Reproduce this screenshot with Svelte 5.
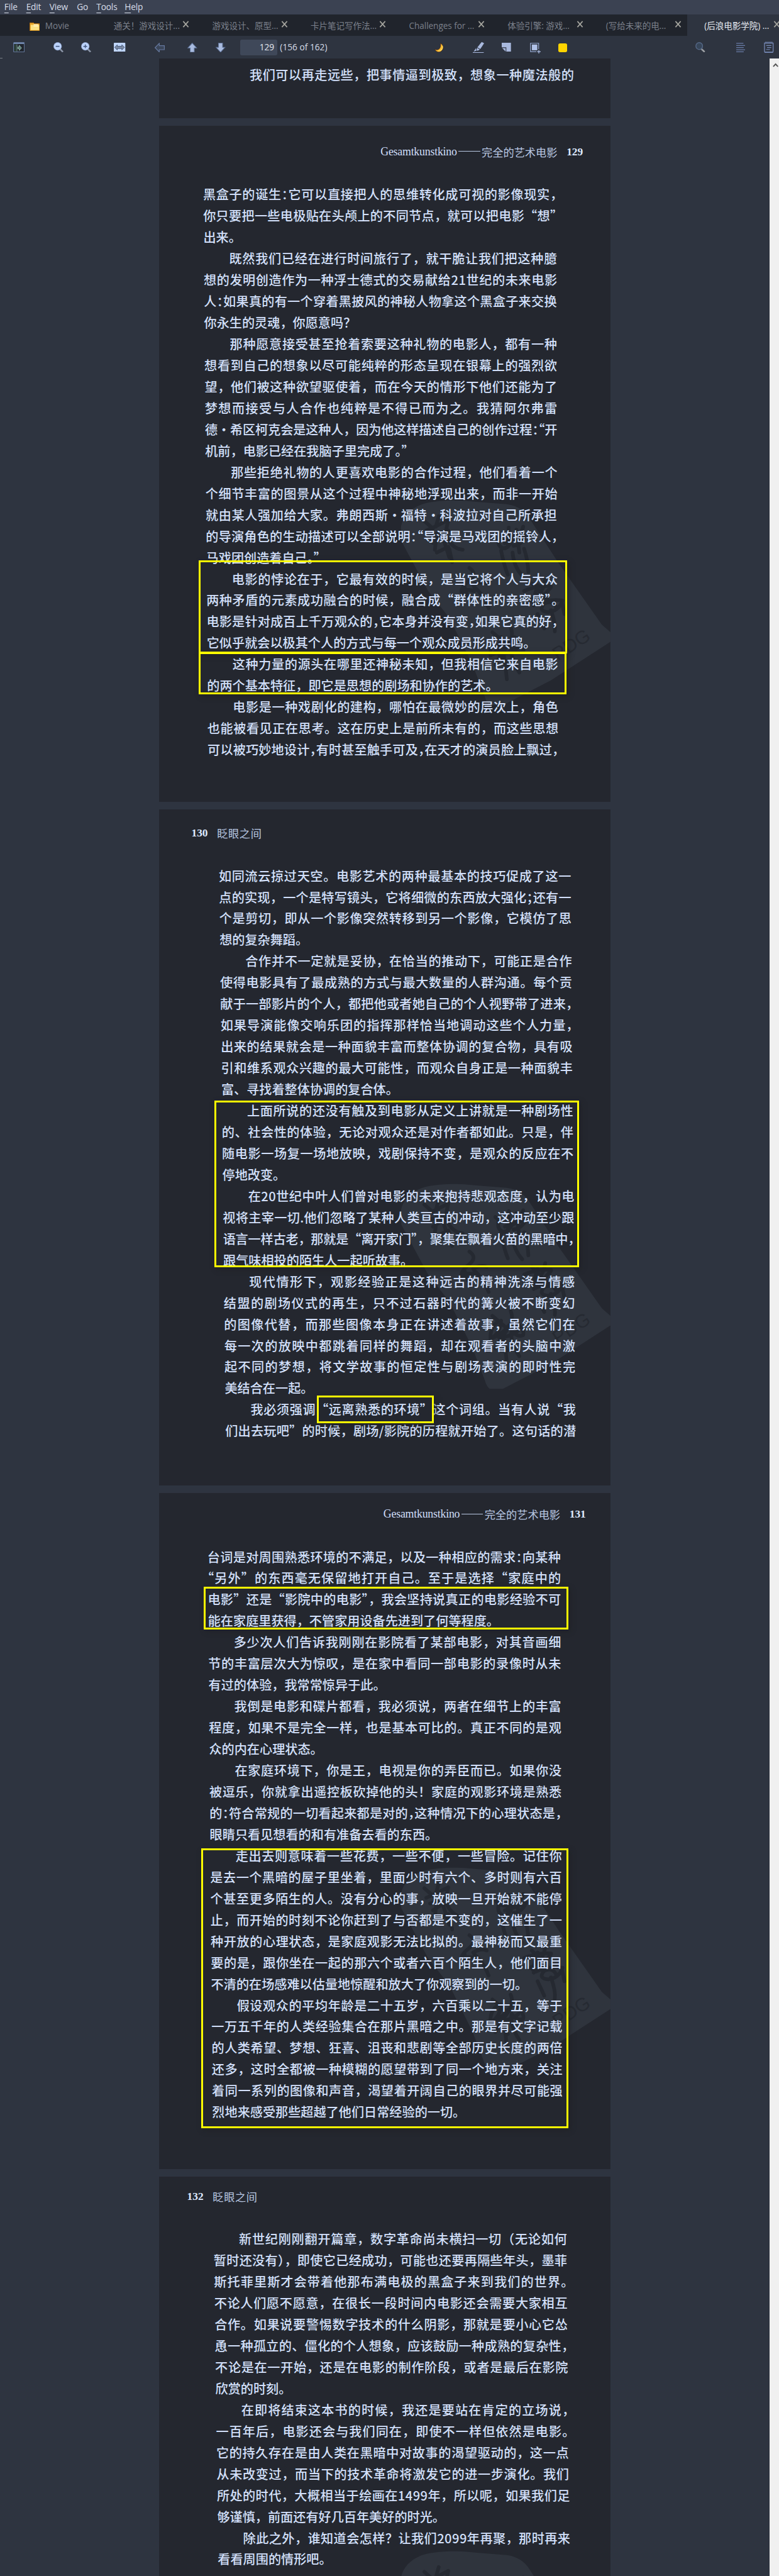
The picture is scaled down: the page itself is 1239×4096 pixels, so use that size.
<script>
  const FONT = 22;

  // Narrow punctuation is written in ASCII in the page data and set half-width.
  const narrow = {
    ',': '，', ':': '：', ';': '；', '?': '？', '!': '！',
    '<': '“', '>': '”', '|': '。', ')': '）', '(': '（'
  };

  const tabs = [
    { title: '通关！游戏设计...' },
    { title: '游戏设计、原型...' },
    { title: '卡片笔记写作法...' },
    { title: 'Challenges for ...' },
    { title: '体验引擎: 游戏...' },
    { title: '(写给未来的电...' },
    { title: '(后浪电影学院) ...', active: true }
  ];

  const menus = [
    ['F', 'ile', 38], ['E', 'dit', 40.5], ['V', 'iew', 47.5], ['', 'Go', 34], ['T', 'ools', 49], ['H', 'elp', 40]
  ];

  // "^" opens a paragraph, "$" closes it; every other line is justified.
  const source = [
    {
      height: 103, textTop: 9.5, left: [157.6, 157.6], right: [721.4, 721.4],
      lines: ['我们可以再走远些，把事情逼到极致，想象一种魔法般的']
    },
    {
      height: 1174, textTop: 101.3, left: [76.6, 84.5], right: [691, 694.5], stamp: true,
      side: 'right', no: '129', headY: 45.5, headEdge: 47.5,
      lines: [
        '黑盒子的诞生:它可以直接把人的思维转化成可视的影像现实,',
        '你只要把一些电极贴在头颅上的不同节点，就可以把电影“想>',
        '出来|$',
        '^既然我们已经在进行时间旅行了，就干脆让我们把这种臆',
        '想的发明创造作为一种浮士德式的交易献给21世纪的未来电影',
        '人:如果真的有一个穿着黑披风的神秘人物拿这个黑盒子来交换',
        '你永生的灵魂，你愿意吗?$',
        '^那种愿意接受甚至抢着索要这种礼物的电影人，都有一种',
        '想看到自己的想象以尽可能纯粹的形态呈现在银幕上的强烈欲',
        '望，他们被这种欲望驱使着，而在今天的情形下他们还能为了',
        '梦想而接受与人合作也纯粹是不得已而为之。我猜阿尔弗雷',
        '德·希区柯克会是这种人，因为他这样描述自己的创作过程:<开',
        '机前，电影已经在我脑子里完成了|>$',
        '^那些拒绝礼物的人更喜欢电影的合作过程，他们看着一个',
        '个细节丰富的图景从这个过程中神秘地浮现出来，而非一开始',
        '就由某人强加给大家。弗朗西斯·福特·科波拉对自己所承担',
        '的导演角色的生动描述可以全部说明:<导演是马戏团的摇铃人,',
        '马戏团创造着自己|>$',
        '^电影的悖论在于，它最有效的时候，是当它将个人与大众',
        '两种矛盾的元素成功融合的时候，融合成“群体性的亲密感>|',
        '电影是针对成百上千万观众的,它本身并没有变,如果它真的好,',
        '它似乎就会以极其个人的方式与每一个观众成员形成共鸣|$',
        '^这种力量的源头在哪里还神秘未知，但我相信它来自电影',
        '的两个基本特征，即它是思想的剧场和协作的艺术|$',
        '^电影是一种戏剧化的建构，哪怕在最微妙的层次上，角色',
        '也能被看见正在思考。这在历史上是前所未有的，而这些思想',
        '可以被巧妙地设计,有时甚至触手可及,在天才的演员脸上飘过,'
      ],
      boxes: [
        { x: 69, y: 755, w: 640, h: 162 },
        { x: 69, y: 914, w: 639, h: 74 }
      ]
    },
    {
      height: 1174, textTop: 97.2, left: [104, 115.2], right: [716.5, 725], stamp: true,
      side: 'left', no: '130', headY: 42, headEdge: 56.5,
      lines: [
        '如同流云掠过天空。电影艺术的两种最基本的技巧促成了这一',
        '点的实现，一个是特写镜头，它将细微的东西放大强化;还有一',
        '个是剪切，即从一个影像突然转移到另一个影像，它模仿了思',
        '想的复杂舞蹈|$',
        '^合作并不一定就是妥协，在恰当的推动下，可能正是合作',
        '使得电影具有了最成熟的方式与最大数量的人群沟通。每个贡',
        '献于一部影片的个人，都把他或者她自己的个人视野带了进来,',
        '如果导演能像交响乐团的指挥那样恰当地调动这些个人力量,',
        '出来的结果就会是一种面貌丰富而整体协调的复合物，具有吸',
        '引和维系观众兴趣的最大可能性，而观众自身正是一种面貌丰',
        '富、寻找着整体协调的复合体|$',
        '^上面所说的还没有触及到电影从定义上讲就是一种剧场性',
        '的、社会性的体验，无论对观众还是对作者都如此。只是，伴',
        '随电影一场复一场地放映，戏剧保持不变，是观众的反应在不',
        '停地改变|$',
        '^在20世纪中叶人们曾对电影的未来抱持悲观态度，认为电',
        '视将主宰一切.他们忽略了某种人类亘古的冲动，这冲动至少跟',
        '语言一样古老，那就是“离开家门>，聚集在飘着火苗的黑暗中,',
        '跟气味相投的陌生人一起听故事|$',
        '^现代情形下，观影经验正是这种远古的精神洗涤与情感',
        '结盟的剧场仪式的再生，只不过石器时代的篝火被不断变幻',
        '的图像代替，而那些图像本身正在讲述着故事，虽然它们在',
        '每一次的放映中都跳着同样的舞蹈，却在观看者的头脑中激',
        '起不同的梦想，将文学故事的恒定性与剧场表演的即时性完',
        '美结合在一起|$',
        '^我必须强调“远离熟悉的环境”这个词组。当有人说“我',
        '们出去玩吧”的时候，剧场/影院的历程就开始了。这句话的潜'
      ],
      boxes: [
        { x: 96, y: 506, w: 634, h: 290 },
        { x: 274, y: 1018, w: 203, h: 48 }
      ]
    },
    {
      height: 1174, textTop: 92.8, left: [84.2, 92.4], right: [698.6, 701.8], stamp: true,
      side: 'right', no: '131', headY: 37.6, headEdge: 42.5,
      lines: [
        '台词是对周围熟悉环境的不满足，以及一种相应的需求:向某种',
        '<另外”的东西毫无保留地打开自己。至于是选择“家庭中的',
        '电影”还是“影院中的电影>，我会坚持说真正的电影经验不可',
        '能在家庭里获得，不管家用设备先进到了何等程度|$',
        '^多少次人们告诉我刚刚在影院看了某部电影，对其音画细',
        '节的丰富层次大为惊叹，是在家中看同一部电影的录像时从未',
        '有过的体验，我常常惊异于此|$',
        '^我倒是电影和碟片都看，我必须说，两者在细节上的丰富',
        '程度，如果不是完全一样，也是基本可比的。真正不同的是观',
        '众的内在心理状态|$',
        '^在家庭环境下，你是王，电视是你的弄臣而已。如果你没',
        '被逗乐，你就拿出遥控板砍掉他的头！家庭的观影环境是熟悉',
        '的:符合常规的一切看起来都是对的,这种情况下的心理状态是,',
        '眼睛只看见想看的和有准备去看的东西|$',
        '^走出去则意味着一些花费，一些不便，一些冒险。记住你',
        '是去一个黑暗的屋子里坐着，里面少时有六个、多时则有六百',
        '个甚至更多陌生的人。没有分心的事，放映一旦开始就不能停',
        '止，而开始的时刻不论你赶到了与否都是不变的，这催生了一',
        '种开放的心理状态，是家庭观影无法比拟的。最神秘而又最重',
        '要的是，跟你坐在一起的那六个或者六百个陌生人，他们面目',
        '不清的在场感难以估量地惊醒和放大了你观察到的一切|$',
        '^假设观众的平均年龄是二十五岁，六百乘以二十五，等于',
        '一万五千年的人类经验集合在那片黑暗之中。那是有文字记载',
        '的人类希望、梦想、狂喜、沮丧和悲剧等全部历史长度的两倍',
        '还多，这时全都被一种模糊的愿望带到了同一个地方来，关注',
        '着同一系列的图像和声音，渴望着开阔自己的眼界并尽可能强',
        '烈地来感受那些超越了他们日常经验的一切|$'
      ],
      boxes: [
        { x: 78, y: 163, w: 633, h: 75 },
        { x: 74, y: 617, w: 637, h: 487 }
      ]
    },
    {
      height: 694, textTop: 90.3, left: [94.5, 102.2], right: [709.3, 714], stamp: true, cut: true,
      side: 'left', no: '132', headY: 35.5, headEdge: 49,
      lines: [
        '^新世纪刚刚翻开篇章，数字革命尚未横扫一切（无论如何',
        '暂时还没有)，即使它已经成功，可能也还要再隔些年头，墨菲',
        '斯托菲里斯才会带着他那布满电极的黑盒子来到我们的世界|',
        '不论人们愿不愿意，在很长一段时间内电影还会需要大家相互',
        '合作。如果说要警惕数字技术的什么阴影，那就是要小心它怂',
        '恿一种孤立的、僵化的个人想象，应该鼓励一种成熟的复杂性,',
        '不论是在一开始，还是在电影的制作阶段，或者是最后在影院',
        '欣赏的时刻|$',
        '^在即将结束这本书的时候，我还是要站在肯定的立场说,',
        '一百年后，电影还会与我们同在，即使不一样但依然是电影|',
        '它的持久存在是由人类在黑暗中对故事的渴望驱动的，这一点',
        '从未改变过，而当下的技术革命将激发它的进一步演化。我们',
        '所处的时代，大概相当于绘画在1499年，所以呢，如果我们足',
        '够谨慎，前面还有好几百年美好的时光|$',
        '^除此之外，谁知道会怎样？让我们2099年再聚，那时再来',
        '看看周围的情形吧|$'
      ]
    }
  ];

  // Advance of one character, in em.
  function advance(ch) {
    if (narrow[ch]) return 0.5;
    if (/\d/.test(ch)) return 0.555;
    if (ch === '.') return 0.278;
    if (ch === '/') return 0.392;
    return 1;
  }

  function setLine(raw, page, i) {
    const t = page.lines.length > 1 ? i / (page.lines.length - 1) : 0;
    const indent = raw[0] === '^';
    const last = raw.endsWith('$');
    const text = raw.replace('^', '').replace('$', '');
    const left = page.left[0] + (page.left[1] - page.left[0]) * t + (indent ? 44.5 : 0);
    const right = page.right[0] + (page.right[1] - page.right[0]) * t;
    const chars = [...text];
    const em = chars.reduce((sum, ch) => sum + advance(ch), 0);
    const spacing = last ? 0.02 : (right - left - em * FONT) / (chars.length - 1);
    const runs = [];
    for (const ch of chars) {
      const kind = narrow[ch] ? 'half' : ch === '·' ? 'mid' : 'full';
      const tail = runs[runs.length - 1];
      if (tail && tail.kind === kind && kind === 'full') tail.text += ch;
      else runs.push({ kind, text: narrow[ch] || ch });
    }
    return { left, spacing, runs };
  }

  const pages = source.map((p) => ({ ...p, set: p.lines.map((l, i) => setLine(l, p, i)) }));
</script>

<div class="app" lang="zh-CN">
  <nav class="menubar">
    {#each menus as [key, rest, width]}
      <span class="menu" style:width="{width}px"><u>{key}</u>{rest}</span>
    {/each}
  </nav>

  <div class="tabs">
    <div class="tab home">
      <svg width="18" height="16" viewBox="0 0 18 16">
        <path d="M.5 1.5h6.500l1.500 1.500h9v12.500H.5z" fill="#e9a92c" stroke="#b9720f" />
        <path d="M2 5h14.500v9H2z" fill="#fbe184" />
        <path d="M7 4.500h8M7 7h8" stroke="#fff8d2" stroke-width="1.500" />
      </svg>
      <span>Movie</span>
    </div>
    {#each tabs as tab}
      <div class="tab" class:active={tab.active}>
        <span class="title">{tab.title}</span>
        <svg class="close" width="12" height="12" viewBox="0 0 12 12"><path d="M1.500 1l9 10M10.500 1l-9 10" stroke="#a3a39d" stroke-width="1.900" /></svg>
      </div>
    {/each}
  </div>

  <div class="toolbar">
    <svg class="sidebar" width="20" height="18" viewBox="0 0 20 18">
      <rect x=".7" y=".7" width="18.600" height="16.300" rx="1" fill="#20252d" stroke="#63779a" stroke-width="1.400" />
      <path d="M1 2h18" stroke="#6f86ac" stroke-width="2.500" />
      <path d="M2 4h4v12H2z" fill="#2b4038" /><path d="M6.500 4v12" stroke="#7d9c93" />
      <path d="M8 8.500h2.500V5.500l4 4.500-4 4.500v-3H8z" fill="#5c7f77" stroke="#a4c8bd" stroke-width=".8" />
    </svg>
    <svg class="zout" width="18" height="18" viewBox="0 0 18 18">
      <path d="M11 11.500l5.500 5.500" stroke="#8a94a6" stroke-width="2.800" />
      <circle cx="7.300" cy="7.300" r="6.800" fill="#bcd3fb" stroke="#90a6d1" stroke-width=".8" />
      <path d="M4 7.300h6.500" stroke="#435880" stroke-width="1.700" />
    </svg>
    <svg class="zin" width="18" height="18" viewBox="0 0 18 18">
      <path d="M11 11.500l5.500 5.500" stroke="#8a94a6" stroke-width="2.800" />
      <circle cx="7.300" cy="7.300" r="6.800" fill="#bcd3fb" stroke="#90a6d1" stroke-width=".8" />
      <path d="M4 7.300h6.500M7.300 4v6.500" stroke="#435880" stroke-width="1.600" />
    </svg>
    <svg class="fit" width="20" height="16" viewBox="0 0 20 16">
      <rect width="20" height="16" rx="1" fill="#c0d6fc" />
      <path d="M1.500 8l4.500-4.500v2.500h8V3.500L18.500 8 14 12.500V10H6v2.500z" fill="#7d8ba5" stroke="#364867" stroke-width=".9" />
    </svg>
    <svg class="back" width="18" height="17" viewBox="0 0 18 17">
      <path d="M.8 8.500L8 1v4h8.800v7H8v4z" fill="#3b4659" stroke="#66799f" stroke-width="1.300" />
    </svg>
    <svg class="up" width="17" height="17" viewBox="0 0 17 17">
      <path d="M8.500.6l7.700 8.400H12v7.400H5V9H.8z" fill="#a9bbdf" stroke="#5f7398" stroke-width="1.100" />
    </svg>
    <svg class="down" width="17" height="17" viewBox="0 0 17 17">
      <path d="M8.500 16.400L.8 8H5V.6h7V8h4.200z" fill="#a9bbdf" stroke="#5f7398" stroke-width="1.100" />
    </svg>
    <span class="pageno">129</span>
    <span class="count">(156 of 162)</span>
    <svg class="moon" width="17" height="17" viewBox="0 0 17 17">
      <path d="M10.500.7c6 3.500 6 10.500 1 14C8 17.300 2.500 16 .8 11.500c4 1.800 7.700.3 9-3 1-2.500 1.200-5 .7-7.800z" fill="#ffb92e" stroke="#43281c" stroke-width=".8" />
      <path d="M13.600 5.500c1.500 5-2.600 9.300-7.600 8.500" fill="none" stroke="#ffd95e" stroke-width="1.500" />
    </svg>
    <svg class="pen" width="20" height="20" viewBox="0 0 20 20">
      <path d="M15.500.8L19.700 3 13 13.200 8 10z" fill="#a9b9de" /><path d="M7.500 11l4.600 3-3.300 1.800-2.300-.2z" fill="#a9b9de" />
      <path d="M5.500 11.500L1.500 17.500l4.500-1.400z" fill="#a9b9de" /><path d="M0 19.200h19" stroke="#a9b9de" stroke-width="1.300" />
    </svg>
    <svg class="note" width="16" height="16" viewBox="0 0 16 16">
      <path d="M0 0h16v16H8V8H0z" fill="#a9b9de" /><path d="M.8 9.300h6v6z" fill="#a9b9de" />
    </svg>
    <svg class="snap" width="19" height="19" viewBox="0 0 19 19">
      <path d="M15 11V.8H.8v14.700H11" fill="none" stroke="#93a5ce" stroke-width="1.300" />
      <rect x="3.200" y="3" width="9.500" height="10" fill="#b0c1e8" />
      <path d="M15.300 12.500v6M12.300 15.500h6.200" stroke="#b0c1e8" stroke-width="1.300" />
    </svg>
    <span class="swatch"></span>
    <svg class="find" width="18" height="18" viewBox="0 0 18 18">
      <path d="M9.500 11l6.500 6" stroke="#8b8f96" stroke-width="3" /><path d="M12 13.200l4 3.600" stroke="#bdbdbd" stroke-width="1" />
      <ellipse cx="6.700" cy="6.800" rx="5.800" ry="6" fill="#37465a" stroke="#566988" stroke-width="1.500" />
    </svg>
    <svg class="outline" width="16" height="17" viewBox="0 0 16 17">
      <path d="M0 1h12.500M0 4.700h16M0 8.400h13M0 12.100h16M0 15.800h13" stroke="#697ba6" stroke-width="1.300" />
    </svg>
    <svg class="pad" width="17" height="20" viewBox="0 0 17 20">
      <path d="M1 2.500V17q0 2 2 2h11q2 0 2-2V2.500z" fill="none" stroke="#7688b5" stroke-width="1.400" />
      <path d="M1 18.500h15" stroke="#7688b5" stroke-width="1.500" />
      <path d="M3 .3v3.500M5.200.3v3.500M7.400.3v3.500M9.600.3v3.500M11.800.3v3.500M14 .3v3.500" stroke="#7688b5" stroke-width="1.100" />
      <path d="M4 7h9M5.500 10.500H13M4 14h6.500" stroke="#7688b5" stroke-width="1.200" />
    </svg>
  </div>

  <div class="body">
    <div class="tick"></div>
    <main class="pages">
      {#each pages as page}
        <section class="page" style:height="{page.height}px">
          {#if page.stamp}
            <svg class="stamp" viewBox="0 0 1170 1170" fill="none">
              <path
                d="M48 190C55 135 100 85 170 65C230 48 330 45 400 52L600 68C660 75 700 110 720 145L870 375L1095 695L1140 735V785L830 985L580 1115H510Q495 1105 485 1070L420 900L300 660L190 520L120 390L50 260Z"
                fill="#2f343d"
              />
              <g stroke="#252931" stroke-width="19" stroke-linecap="round" stroke-linejoin="round">
                <path d="M170 155l45 40M245 130l-15 55M180 205q60-25 115-55l-10 45M200 235l95-30M215 270l70-45M235 220l-10 85M260 220l40 125M285 235q30 65 85 70M235 320l60-30M300 300l15 70" />
                <path d="M540 220q40 40 90 20t55-55M560 230q-15 50 15 65t65-60M610 190l-5 100M590 270q70-20 110-40q-20 50-65 55M650 200l15 120M570 310q15 75 35 125M630 320q5 70 50 120M690 300q20 60 22 120" />
                <path d="M405 400q45 30-5 70q-45 35-35 60q25-25 65-10M425 490q40-25 70-10M430 500q50 40 75 110M380 500l15 50" />
                <path d="M690 520q65-30 140-25M730 480l80 80M800 460q-10 80-80 110M760 490l-25 90M830 500q-50 60-90 95M750 590q70-30 140-20q-20 55-75 60q-55-5-20-45q45-20 65 25M760 640l35 75M830 620q25 70 20 110M885 570l15 70" />
                <path d="M515 855q-5-75 55-95q-5 60-45 90q60-25 85-65M525 735l70 60M620 710q20 45-20 100t-60 95M640 760q55 50 45 75q-30 15-60-25q-10 60 40 135M560 850q70-10 100-40M585 860q10 60 15 120M550 830l55 85" />
              </g>
              {#if !page.cut}
                <text class="mark" x="865" y="885" transform="rotate(-33 865 885)">PDG</text>
              {/if}
            </svg>
          {/if}

          <div class="head {page.side}" style:height="{page.textTop}px" style:padding-top="{page.no ? page.headY - 15 : 0}px" style:--edge="{page.headEdge}px">
            {#if page.side === 'right'}
              <span class="latin">Gesamtkunstkino</span><i class="dash"></i><span class="cjk">完全的艺术电影</span><b>{page.no}</b>
            {:else if page.side === 'left'}
              <b>{page.no}</b><span class="cjk wide">眨眼之间</span>
            {/if}
          </div>

          {#each page.set as line}
            <p class="line" style:padding-left="{line.left}px" style:letter-spacing="{line.spacing}px">{#each line.runs as run}<span class={run.kind}>{run.text}</span>{/each}</p>
          {/each}

          {#each page.boxes ?? [] as box}
            <div class="box" style:left="{box.x}px" style:top="{box.y}px" style:width="{box.w}px" style:height="{box.h}px"></div>
          {/each}
        </section>
      {/each}
    </main>
    <div class="scrollbar">
      <svg width="10" height="8" viewBox="0 0 10 8"><path d="M1 6.500L5 2l4 4.500" fill="none" stroke="#505050" stroke-width="2" /></svg>
    </div>
  </div>
</div>

<style>
  :global(body) { margin: 0; background: #2e3440; overflow: hidden; }
  .app {
    width: 1353px;
    height: 4473px;
    zoom: 0.91574;
    overflow: hidden;
    background: #2e3440;
    color: #d8dee9;
    font-family: 'Open Sans', 'Noto Sans CJK SC', sans-serif;
    font-size: 15px;
  }
  svg { display: block; flex: none; }

  .menubar { display: flex; height: 25px; box-sizing: border-box; padding-left: 7.5px; background: #3b4252; line-height: 25px; letter-spacing: -0.2px; }
  .menu { flex: none; white-space: nowrap; }
  .menu u { text-underline-offset: 4px; text-decoration-thickness: 1px; }

  .tabs { display: flex; height: 37px; background: #20242c; color: #7b808b; }
  .tab { display: flex; flex: none; box-sizing: border-box; width: 171px; padding-left: 29.500px; line-height: 41px; white-space: nowrap; font-size: 14.8px; }
  .tab .title { width: 119.500px; letter-spacing: -0.05px; }
  .tab.home { width: 168px; padding-left: 51px; gap: 9.500px; }
  .tab.home svg { margin-top: 13px; }
  .tab.active { background: #2e3440; color: #e5e9f0; }
  .close { margin-top: 11.500px; }

  .toolbar { display: flex; align-items: flex-start; height: 40px; padding-top: 0; }
  .toolbar > svg { margin-top: 11px; }
  .toolbar .sidebar { margin-left: 22.500px; }
  .toolbar .zout { margin-left: 50.500px; }
  .toolbar .zin { margin-left: 30px; }
  .toolbar .fit { margin-left: 39px; margin-top: 12px; }
  .toolbar .back { margin-left: 50.500px; margin-top: 12px; }
  .toolbar .up { margin-left: 39px; margin-top: 12px; }
  .toolbar .down { margin-left: 32.500px; margin-top: 12px; }
  .pageno { flex: none; box-sizing: border-box; width: 65px; height: 27px; margin: 7px 0 0 25px; padding-right: 5.500px; border-radius: 3px; background: #3f4859; text-align: right; line-height: 26px; color: #e5e9f0; }
  .count { flex: none; width: 84px; margin: 7px 0 0 4.500px; line-height: 26px; white-space: nowrap; color: #d8dee9; }
  .toolbar .moon { margin-left: 184.500px; margin-top: 12px; }
  .toolbar .pen { margin-left: 49px; margin-top: 10px; }
  .toolbar .note { margin-left: 31px; margin-top: 12px; }
  .toolbar .snap { margin-left: 33px; margin-top: 12px; }
  .swatch { flex: none; width: 15px; height: 15.500px; margin: 13px 0 0 30px; border-radius: 3px; background: #ffd400; }
  .toolbar .find { margin-left: 222.500px; }
  .toolbar .outline { margin-left: 53px; margin-top: 12px; }
  .toolbar .pad { margin-left: 32.500px; margin-top: 10px; }

  .body { display: flex; height: 4371px; }
  .tick { flex: none; width: 4px; height: 1px; margin-top: -1px; margin-right: 272px; background: #7a7f88; }
  .pages { flex: none; display: flex; flex-direction: column; gap: 13px; width: 784px; }
  .scrollbar { flex: none; width: 16px; margin-left: auto; background: #f0f0f0; }
  .scrollbar svg { margin: 7px 0 0 5px; }

  .page { position: relative; flex: none; overflow: hidden; background: #24272f; }
  .head { display: flex; box-sizing: border-box; line-height: 30px; font-size: 19px; white-space: nowrap; color: #b9c7e2; }
  .head.right { justify-content: flex-end; padding-right: var(--edge); }
  .head.left { padding-left: var(--edge); }
  .head .latin { font-family: 'Liberation Serif', serif; font-size: 19.5px; letter-spacing: -0.25px; color: #d0defa; }
  .head .cjk { font-family: 'Noto Sans CJK SC', sans-serif; font-weight: 400; font-size: 18.8px; }
  .head .wide { margin-left: 16px; letter-spacing: 0.7px; }
  .dash { width: 38px; height: 1.2px; margin: 14px 2.500px 0; background: #b9c7e2; }
  .head b { font-family: 'Liberation Serif', serif; font-size: 19px; color: #dfeaff; }
  .head.right b { margin-left: 16px; }

  .line {
    position: relative;
    margin: 0;
    height: 37.08px;
    line-height: 37.08px;
    font-family: 'Noto Sans CJK SC', sans-serif;
    font-size: 22px;
    font-weight: 500;
    color: #d3e0fb;
    white-space: nowrap;
    text-spacing-trim: space-all;
  }
  .half { font-feature-settings: 'halt'; }
  .mid { display: inline-block; width: 1em; text-align: center; }

  .box { position: absolute; box-sizing: border-box; border: 3.3px solid #ffff00; box-shadow: 3px 3px 8px rgba(30, 31, 34, 0.6); }
  .stamp { position: absolute; left: 404px; top: 635px; width: 390px; height: 390px; }
  .mark { font-family: 'Liberation Sans', sans-serif; font-size: 98px; fill: #262a32; }
</style>
